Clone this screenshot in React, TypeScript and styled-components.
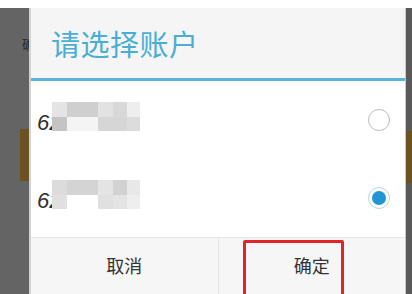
import React from 'react';
import styled, { createGlobalStyle } from 'styled-components';

const GlobalStyle = createGlobalStyle`
  html, body {
    margin: 0;
    padding: 0;
    background: #ffffff;
    font-family: "Noto Sans CJK SC", "Noto Sans", sans-serif;
  }
`;

const row1 = [
    ['#e4e4e4', 15], ['#cfcfcf', 31], ['#e2e2e2', 15], ['#d8d8d8', 14], ['#eeeeee', 13],
    ['#c4c4c4', 15], ['#f4f4f4', 31], ['#d6d6d6', 15], ['#d6d6d6', 14], ['#dcdcdc', 13],
] as const;

const row2 = [
    ['#dcdcdc', 15], ['#d4d4d4', 31], ['#e4e4e4', 15], ['#d2d2d2', 14], ['#e8e8e8', 13],
    ['#e0e0e0', 15], ['#ffffff', 31], ['#e0e0e0', 15], ['#e4e4e4', 14], ['#eeeeee', 13],
] as const;

const accounts = [
    { id: 1, cells: row1, checked: false },
    { id: 2, cells: row2, checked: true },
];

export default function App() {
    return (
        <>
            <GlobalStyle/>
            <Page>
                <Stage>
                    <LeftStrip>
                        <CutGlyph>确</CutGlyph>
                        <BrownBar $width={9}/>
                    </LeftStrip>
                    <Dialog>
                        <Header>
                            <Title>请选择账户</Title>
                        </Header>
                        <List>
                            {accounts.map(a => (
                                <Row key={a.id}>
                                    <Number>62</Number>
                                    <Mosaic>
                                        {a.cells.map(([c, w], i) => (
                                            <Cell key={i} $color={c} $width={w}/>
                                        ))}
                                    </Mosaic>
                                    <Radio $checked={a.checked}/>
                                </Row>
                            ))}
                        </List>
                        <Footer>
                            <Button $divider>取消</Button>
                            <Button>
                                确定
                                <Highlight/>
                            </Button>
                        </Footer>
                    </Dialog>
                    <RightStrip>
                        <BrownBar $width={6}/>
                    </RightStrip>
                </Stage>
            </Page>
        </>
    );
}

const Page = styled.div`
  width: 412px;
  height: 294px;
  overflow: hidden;
  background: #ffffff;
  padding-top: 8px;
  box-sizing: border-box;
`

const Stage = styled.div`
  display: flex;
  height: 286px;
`

const LeftStrip = styled.div`
  width: 29px;
  background: #646464;
  border-right: 2px solid #d2d2d2;
  display: flex;
  flex-direction: column;
  align-items: flex-end;
`

const CutGlyph = styled.span`
  margin-top: 29px;
  width: 7px;
  overflow: hidden;
  white-space: nowrap;
  font-size: 13px;
  line-height: 14px;
  color: #2a2a2a;
`

const BrownBar = styled.div<{ $width: number }>`
  width: ${p => p.$width}px;
  height: 52px;
  margin-top: 78px;
  background: #6c5220;
`

const RightStrip = styled.div`
  width: 6px;
  background: #595959;
  border-left: 1px solid #c8c8c8;
  display: flex;
  flex-direction: column;
  margin-top: 0;

  ${BrownBar} {
    margin-top: 123px;
  }
`

const Dialog = styled.div`
  flex: 1;
  display: flex;
  flex-direction: column;
  background: #ffffff;
`

const Header = styled.div`
  height: 70px;
  background: #f5f5f5;
  display: flex;
  align-items: center;
  padding-left: 20px;
  border-bottom: 3px solid #5bb4da;
`

const Title = styled.h1`
  margin: 0;
  font-size: 29px;
  font-weight: 400;
  letter-spacing: 0.5px;
  color: #4aaed4;
`

const List = styled.div`
  display: flex;
  flex-direction: column;
`

const Row = styled.div`
  height: 78px;
  display: flex;
  align-items: center;
  padding: 0 15px 0 6px;
`

const Number = styled.span`
  width: 15px;
  overflow: hidden;
  white-space: nowrap;
  font-family: "Liberation Sans Narrow", "Liberation Sans", sans-serif;
  font-style: italic;
  font-size: 22px;
  color: #2e2e2e;
  margin-top: 6px;
`

const Mosaic = styled.div`
  width: 88px;
  display: flex;
  flex-wrap: wrap;
  margin-bottom: 7px;
`

const Cell = styled.span<{ $color: string; $width: number }>`
  width: ${p => p.$width}px;
  height: 14.5px;
  background: ${p => p.$color};
`

const Radio = styled.span<{ $checked: boolean }>`
  margin-left: auto;
  width: 22px;
  height: 22px;
  box-sizing: border-box;
  border-radius: 50%;
  border: 1.5px solid ${p => (p.$checked ? '#b8d6e6' : '#bdbdbd')};
  display: flex;
  align-items: center;
  justify-content: center;

  &::after {
    content: '';
    display: ${p => (p.$checked ? 'block' : 'none')};
    width: 14px;
    height: 14px;
    border-radius: 50%;
    background: #2196d3;
  }
`

const Footer = styled.div`
  flex: 1;
  display: flex;
  background: #f6f6f6;
  border-top: 1px solid #e6e6e6;
`

const Button = styled.div<{ $divider?: boolean }>`
  position: relative;
  flex: 1;
  display: flex;
  align-items: center;
  justify-content: center;
  font-size: 18px;
  color: #333333;
  padding-bottom: 2px;
  border-right: ${p => (p.$divider ? '1px solid #e4e4e4' : 'none')};
`

const Highlight = styled.span`
  position: absolute;
  left: 24px;
  top: 2px;
  width: 101px;
  height: 64px;
  box-sizing: border-box;
  border: 3px solid #e0242a;
  border-radius: 2px;
`
